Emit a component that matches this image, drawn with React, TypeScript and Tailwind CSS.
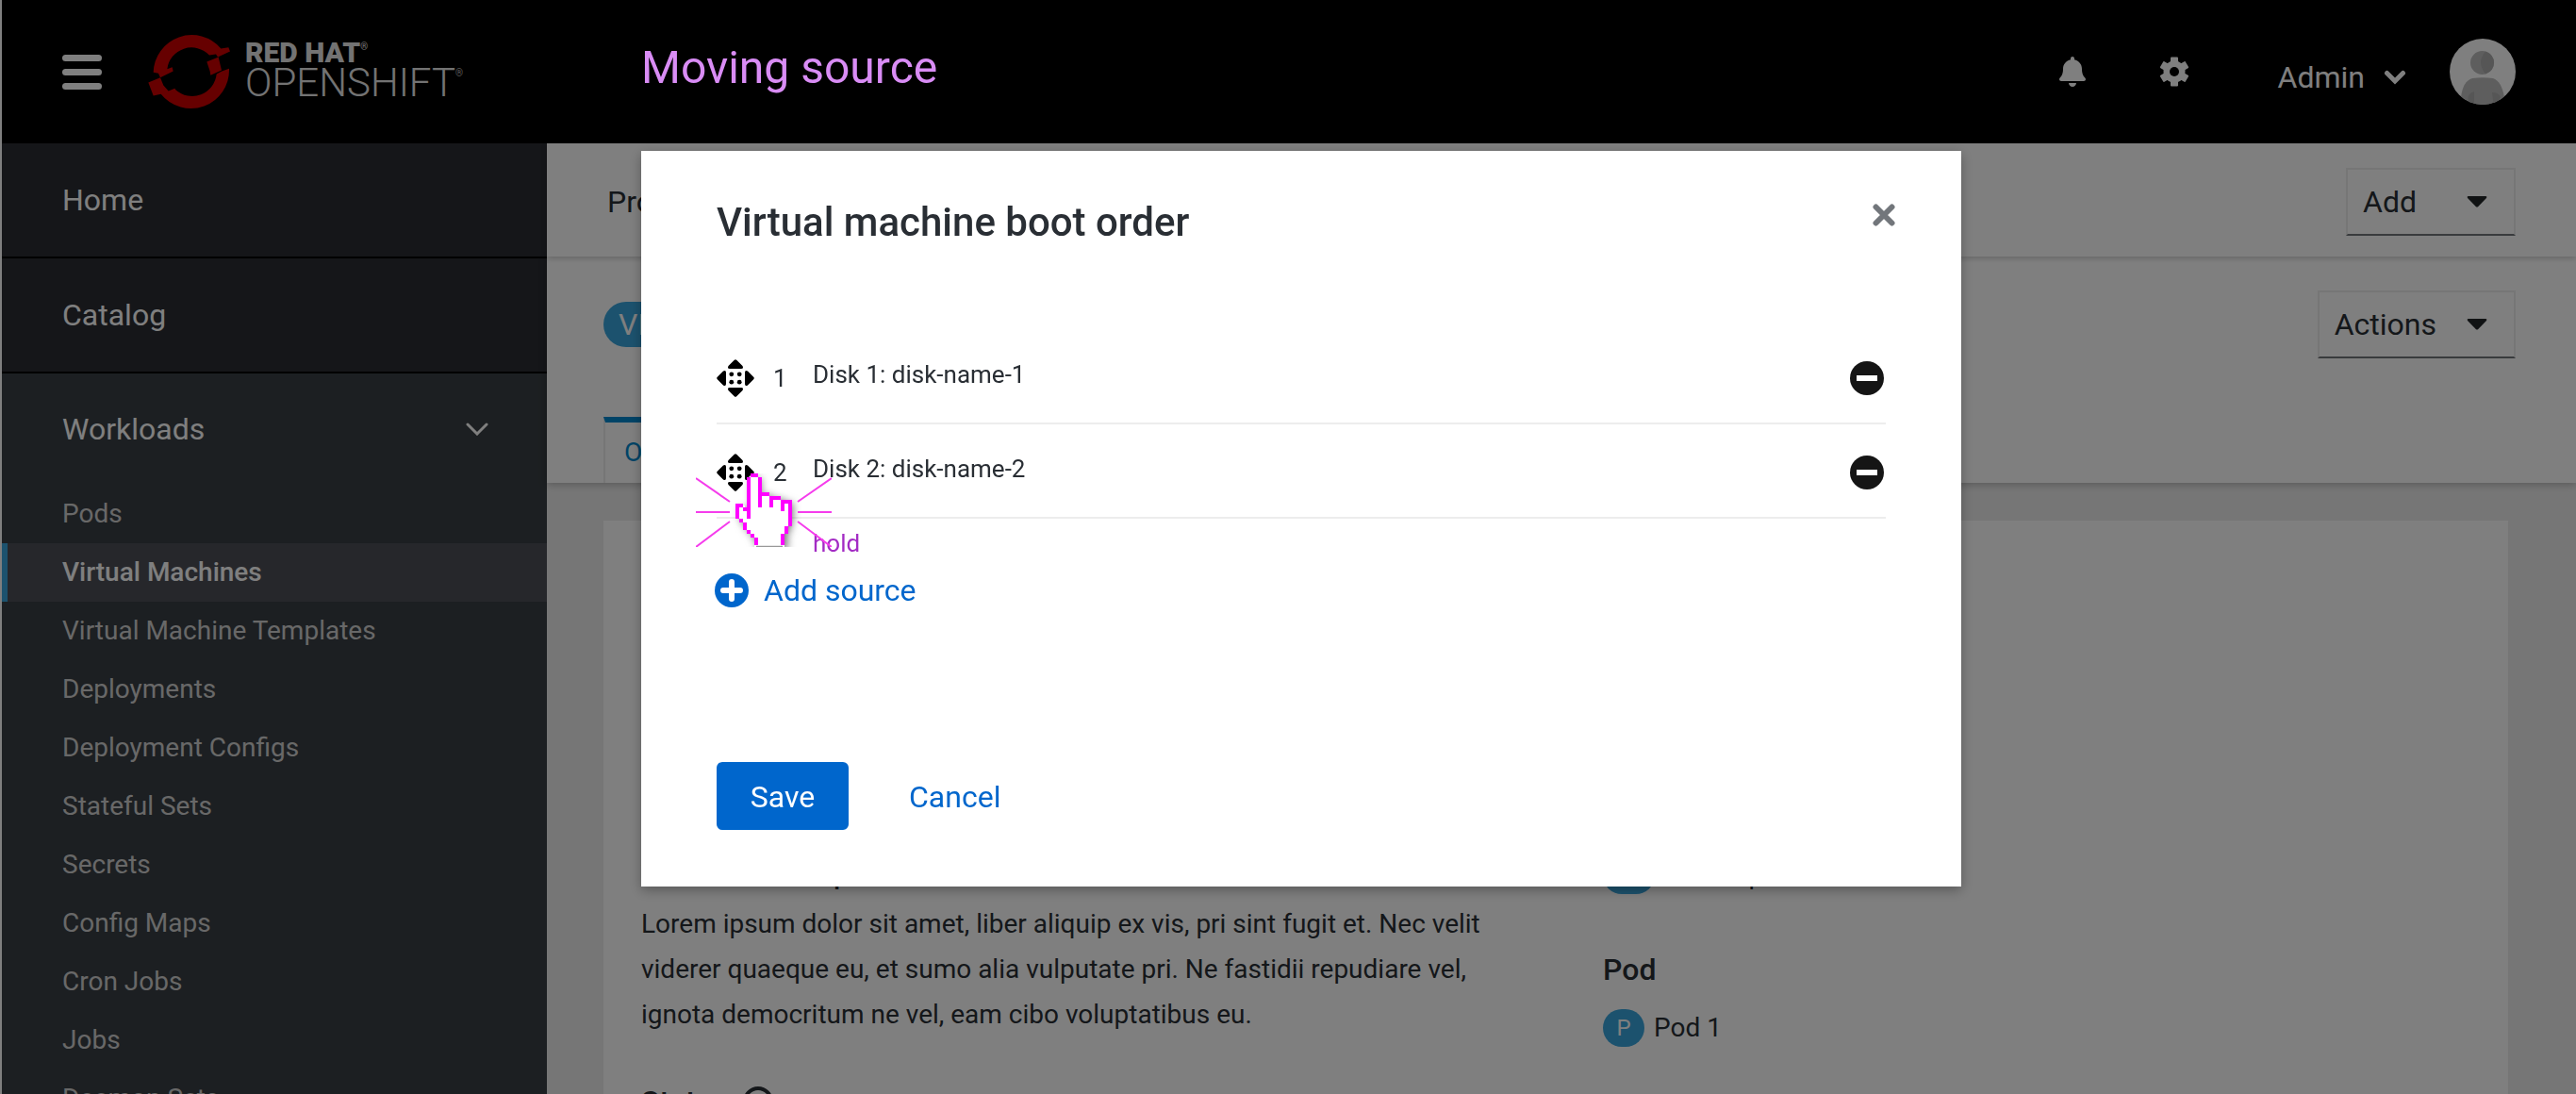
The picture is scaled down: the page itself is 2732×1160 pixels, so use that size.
import React from "react";
import { FaBell } from "react-icons/fa";

const workloads = [
  "Pods",
  "Virtual Machines",
  "Virtual Machine Templates",
  "Deployments",
  "Deployment Configs",
  "Stateful Sets",
  "Secrets",
  "Config Maps",
  "Cron Jobs",
  "Jobs",
  "Daemon Sets",
];

const disks = [
  { order: 1, label: "Disk 1: disk-name-1" },
  { order: 2, label: "Disk 2: disk-name-2" },
];

function OpenShiftMark() {
  return (
    <svg viewBox="320 30 270 260" className="h-[87px] w-[90px]" fill="#cc0000" aria-hidden="true">
      <path d="M340 167 A122 122 0 0 1 555 91 L579 87 L584 100 L545 118 L539 109 L518 112 A78 78 0 0 0 384 156 L400 150 L403 163 L362 183 L356 170 Z" />
      <path d="M510 133 L547 118 L557 160 L522 176 L520 163 Z" />
      <path d="M581 155 A122 122 0 0 1 364 236 L340 241 L324 199 L362 183 L372 208 L388 226 L408 218 L411 222 A78 78 0 0 0 541 172 L558 163 Z" />
    </svg>
  );
}

function GearIcon() {
  return (
    <svg viewBox="-16 -16 32 32" className="size-8" aria-hidden="true">
      <g fill="#fff">
        <circle r="11.5" />
        <rect x="-4" y="-15.5" width="8" height="31" rx="1" />
        <rect x="-4" y="-15.5" width="8" height="31" rx="1" transform="rotate(60)" />
        <rect x="-4" y="-15.5" width="8" height="31" rx="1" transform="rotate(120)" />
      </g>
      <circle r="5" fill="#000" />
    </svg>
  );
}

function Avatar() {
  return (
    <svg viewBox="0 0 70 70" className="size-[70px]" role="img" aria-label="Admin avatar">
      <defs>
        <clipPath id="avatar-clip">
          <circle cx="35" cy="35" r="35" />
        </clipPath>
      </defs>
      <g clipPath="url(#avatar-clip)">
        <rect width="70" height="70" fill="#fff" />
        <path d="M12 62 Q14 45 24 42 Q35 40.500 46 42 Q55 45 58 62 V70 H12 Z" fill="#bdbdbd" />
        <path d="M26 56 Q19 58 19.500 64 L22 70 H26 Z M45 57 Q52 57 54 62 L50 70 H46.500 Z" fill="#acacac" />
        <circle cx="34.500" cy="25.500" r="12.500" fill="#bdbdbd" />
        <path d="M38 13.500 Q28 25 38 37.500 Q47 34 47 25.500 Q47 17 38 13.500 Z" fill="#acacac" />
      </g>
    </svg>
  );
}

function Caret() {
  return (
    <svg viewBox="0 0 22 12" className="h-3 w-[22px]" fill="#212427" aria-hidden="true">
      <path d="M1.500 0 H20.500 Q22 0.500 21 2 L12 11.200 Q11 12 10 11.200 L1 2 Q0 0.500 1.500 0 Z" />
    </svg>
  );
}

function MoveIcon() {
  const arrow = "M18.800 0.800 Q20 -0.400 21.200 0.800 L27.500 7 Q29 10 26 10 H14 Q11 10 12.500 7 Z";
  return (
    <svg viewBox="0 0 40 40" className="size-10" aria-hidden="true">
      {[0, 90, 180, 270].map((a) => (
        <path key={a} d={arrow} transform={`rotate(${a} 20 20)`} />
      ))}
      <circle cx="15.800" cy="15.800" r="2.400" />
      <circle cx="24.200" cy="15.800" r="2.400" />
      <circle cx="15.800" cy="24.200" r="2.400" />
      <circle cx="24.200" cy="24.200" r="2.400" />
    </svg>
  );
}

/* Pixel hand on a 4px grid, with click rays on both sides. */
function HoldCursor() {
  return (
    <svg viewBox="0 0 144 78" className="absolute top-[342px] left-[58px] h-[78px] w-36" aria-hidden="true">
      <g transform="translate(42 0)">
        <path
          d="M16 2 H24 V20 H36 V24 H48 V28 H58 V48 H56 V58 H52 V78 H20 V68 H16 V60 H10 V52 H4 V46 H2 V34 H10 V38 H14 V4 Z"
          fill="#fff"
          className="drop-shadow-[3px_3px_4px_rgba(0,0,0,0.55)]"
        />
        <path
          fill="#ff00ff"
          d="M16 0h8v4h-8z M12 4h4v44h-4z M24 4h4v32h-4z M28 20h8v4h-8z M36 24h4v12h-4z M40 24h8v4h-8z M48 28h4v12h-4z M52 28h8v4h-8z M56 32h4v24h-4z M0 32h8v4h-8z M0 36h4v12h-4z M8 36h4v4h-4z M4 48h4v4h-4z M8 52h4v8h-4z M12 60h4v4h-4z M16 64h4v4h-4z M20 68h4v8h-4z M52 56h4v8h-4z M48 64h4v12h-4z"
        />
        <path d="M22 77.500 H50" stroke="#999" strokeWidth="1.500" />
      </g>
      <path
        d="M0 5 L36 30 M0 41 H36 M0 78 L36 51 M108 30 L144 5 M108 41 H144 M108 51 L144 78"
        stroke="#f53cec"
        strokeWidth="2"
        fill="none"
      />
    </svg>
  );
}

function Header() {
  return (
    <header className="flex h-[152px] shrink-0 items-center bg-black px-16 text-white">
      <button type="button" aria-label="Toggle navigation" className="flex w-[42px] flex-col gap-2">
        <span className="h-[7px] w-full rounded-sm bg-white" />
        <span className="h-[7px] w-full rounded-sm bg-white" />
        <span className="h-[7px] w-full rounded-sm bg-white" />
      </button>
      <a href="#home" aria-label="Red Hat OpenShift" className="ml-12 flex items-center gap-[14px] pb-1">
        <OpenShiftMark />
        <span className="flex flex-col text-[#e6e6e6]">
          <span className="flex items-start text-[30px] leading-7 font-black">
            RED HAT<span className="text-[10px] leading-4 font-normal">®</span>
          </span>
          <span className="flex items-start text-[42px] leading-9 font-light">
            OPENSHIFT<span className="text-[10px] leading-4">®</span>
          </span>
        </span>
      </a>
      <div className="ml-auto flex items-center">
        <button type="button" aria-label="Notifications">
          <FaBell className="size-8" />
        </button>
        <button type="button" aria-label="Settings" className="ml-[76px]">
          <GearIcon />
        </button>
        <button type="button" className="ml-[94px] flex items-center gap-5 pt-3 text-[32px] leading-10">
          Admin
          <svg viewBox="0 0 24 16" className="h-4 w-6" fill="none" stroke="#fff" strokeWidth="5" strokeLinecap="round" aria-hidden="true">
            <path d="M3.500 3.500 L12 12 L20.500 3.500" />
          </svg>
        </button>
        <span className="ml-[46px]">
          <Avatar />
        </span>
      </div>
    </header>
  );
}

function Sidebar() {
  return (
    <nav className="w-[578px] shrink-0 bg-[#393f44] text-[32px] text-white">
      <a href="#home" className="flex h-[122px] items-center border-b-2 border-black bg-[#2a2c32] px-16">
        Home
      </a>
      <a href="#catalog" className="flex h-[122px] items-center border-b-2 border-black bg-[#2a2c32] px-16">
        Catalog
      </a>
      <button type="button" aria-expanded="true" className="flex h-[118px] w-full items-center justify-between pr-[62px] pl-16">
        Workloads
        <svg viewBox="0 0 24 14" className="h-[14px] w-6" fill="none" stroke="#fff" strokeWidth="3" strokeLinecap="round" aria-hidden="true">
          <path d="M2 2 L12 12 L22 2" />
        </svg>
      </button>
      <ul className="text-[28px]">
        {workloads.map((name) => (
          <li key={name}>
            <a
              href={"#" + name}
              className={
                name === "Virtual Machines"
                  ? "flex h-[62px] items-center border-l-[6px] border-[#39a5dc] bg-[#4d4f56] pl-[58px] font-medium"
                  : "flex h-[62px] items-center pl-16 text-[#d1d1d1]"
              }
            >
              {name}
            </a>
          </li>
        ))}
      </ul>
    </nav>
  );
}

function MenuButton({ children }: { children: React.ReactNode }) {
  return (
    <button
      type="button"
      className="flex h-[72px] min-w-[180px] items-center justify-between gap-8 border-2 border-[#ededed] border-b-[#72767b] pr-7 pl-4 text-[32px]"
    >
      {children}
      <Caret />
    </button>
  );
}

function Badge({ children }: { children: React.ReactNode }) {
  return (
    <span className="flex h-10 min-w-11 items-center justify-center rounded-full bg-[#39a5dc] px-3 text-[24px] text-white">
      {children}
    </span>
  );
}

function Content() {
  return (
    <main className="flex min-w-0 flex-1 flex-col bg-[#ededed] text-[#292e34]">
      <div className="z-20 flex h-[120px] shrink-0 items-center justify-between bg-white px-16 pt-1 shadow-[0_2px_6px_rgba(0,0,0,0.2)]">
        <span className="text-[32px]">Project: default</span>
        <MenuButton>Add</MenuButton>
      </div>
      <div className="z-10 flex h-[240px] shrink-0 flex-col justify-between bg-white pr-16 pl-[60px] shadow-[0_2px_8px_rgba(0,0,0,0.25)]">
        <div className="flex items-center justify-between pt-9">
          <h1 className="flex items-center gap-4 text-[32px]">
            <span className="flex h-12 items-center rounded-full bg-[#39a5dc] px-4 text-[32px] text-white">VM</span>
            vm-name
          </h1>
          <MenuButton>Actions</MenuButton>
        </div>
        <div className="flex">
          <a
            href="#overview"
            className="flex h-[70px] items-center border-x-2 border-t-[6px] border-x-[#ededed] border-t-[#0088ce] px-5 text-[28px] text-[#0088ce]"
          >
            Overview
          </a>
        </div>
      </div>
      <section className="mt-10 mr-[72px] ml-[60px] grid flex-1 grid-cols-[1020px_1fr] bg-white px-10 pt-[356px] text-[28px]">
        <div>
          <h2 className="h-12 text-[28px] leading-10 font-medium">Virtual machine profile</h2>
          <p className="w-[920px] leading-[48px]">
            Lorem ipsum dolor sit amet, liber aliquip ex vis, pri sint fugit et. Nec velit viderer quaeque eu, et sumo
            alia vulputate pri. Ne fastidii repudiare vel, ignota democritum ne vel, eam cibo voluptatibus eu.
          </p>
          <h2 className="mt-11 flex items-center gap-4 text-[32px] leading-[48px] font-medium">
            Status
            <span className="size-8 rounded-full border-4 border-[#292e34]" />
          </h2>
        </div>
        <div>
          <div className="flex h-10 items-center gap-[10px]">
            <Badge>NS</Badge>
            Namespace
          </div>
          <h2 className="mt-14 text-[32px] leading-[48px] font-medium">Pod</h2>
          <div className="mt-[18px] flex h-10 items-center gap-[10px]">
            <Badge>P</Badge>
            Pod 1
          </div>
        </div>
      </section>
    </main>
  );
}

function BootOrderDialog() {
  return (
    <section
      role="dialog"
      aria-modal="true"
      aria-labelledby="dialog-title"
      className="relative bg-white pt-12 pb-[60px] text-[#292e34] shadow-[0_4px_12px_rgba(0,0,0,0.3)]"
    >
      <div className="flex h-14 items-start justify-between pr-[70px] pl-20">
        <h2 id="dialog-title" className="text-[42px] leading-[56px] font-medium">
          Virtual machine boot order
        </h2>
        <button type="button" aria-label="Close" className="flex h-10 items-center">
          <svg viewBox="0 0 24 24" className="size-6" stroke="#72767b" strokeWidth="6" strokeLinecap="round" aria-hidden="true">
            <path d="M3.500 3.500 L20.500 20.500 M20.500 3.500 L3.500 20.500" />
          </svg>
        </button>
      </div>
      <ol className="mx-20 mt-[86px] text-[26px] leading-10">
        {disks.map((disk) => (
          <li key={disk.order} className="flex h-[100px] items-center border-b-2 border-[#ededed] pt-1">
            <button type="button" aria-label={"Move " + disk.label} className="cursor-grab">
              <MoveIcon />
            </button>
            <span className="ml-5 w-[42px]">{disk.order}</span>
            <span className="pb-2">{disk.label}</span>
            <button
              type="button"
              aria-label={"Remove " + disk.label}
              className="mr-0.5 ml-auto flex size-9 items-center justify-center rounded-full bg-[#151515]"
            >
              <span className="h-1.5 w-[22px] bg-white" />
            </button>
          </li>
        ))}
      </ol>
      <button type="button" className="mt-[58px] ml-[78px] flex h-9 items-center gap-4 text-[32px] text-[#0066cc]">
        <svg viewBox="0 0 36 36" className="size-9" aria-hidden="true">
          <circle cx="18" cy="18" r="18" fill="#0066cc" />
          <path d="M18 9 V27 M9 18 H27" stroke="#fff" strokeWidth="6" strokeLinecap="round" />
        </svg>
        Add source
      </button>
      <div className="mt-[164px] ml-20 flex gap-16 text-[32px]">
        <button type="button" className="h-[72px] w-[140px] rounded-md bg-[#0066cc] pt-0.5 text-white">
          Save
        </button>
        <button type="button" className="h-[72px] pt-0.5 text-[#0066cc]">
          Cancel
        </button>
      </div>
      <span className="absolute top-[396px] left-[182px] text-[26px] leading-10 text-[#a32cc4]">hold</span>
      <HoldCursor />
    </section>
  );
}

export default function App() {
  return (
    <div className="relative flex h-screen flex-col overflow-hidden border-l-2 border-white bg-white font-[Roboto,sans-serif]">
      <Header />
      <div className="flex min-h-0 flex-1">
        <Sidebar />
        <Content />
      </div>
      <div className="fixed inset-0 z-30 flex justify-center bg-black/50 pl-7">
        <div className="w-[1400px] max-w-full">
          <p className="flex h-40 items-center pb-4 text-[48px] text-[#d98cf5]">Moving source</p>
          <BootOrderDialog />
        </div>
      </div>
    </div>
  );
}
